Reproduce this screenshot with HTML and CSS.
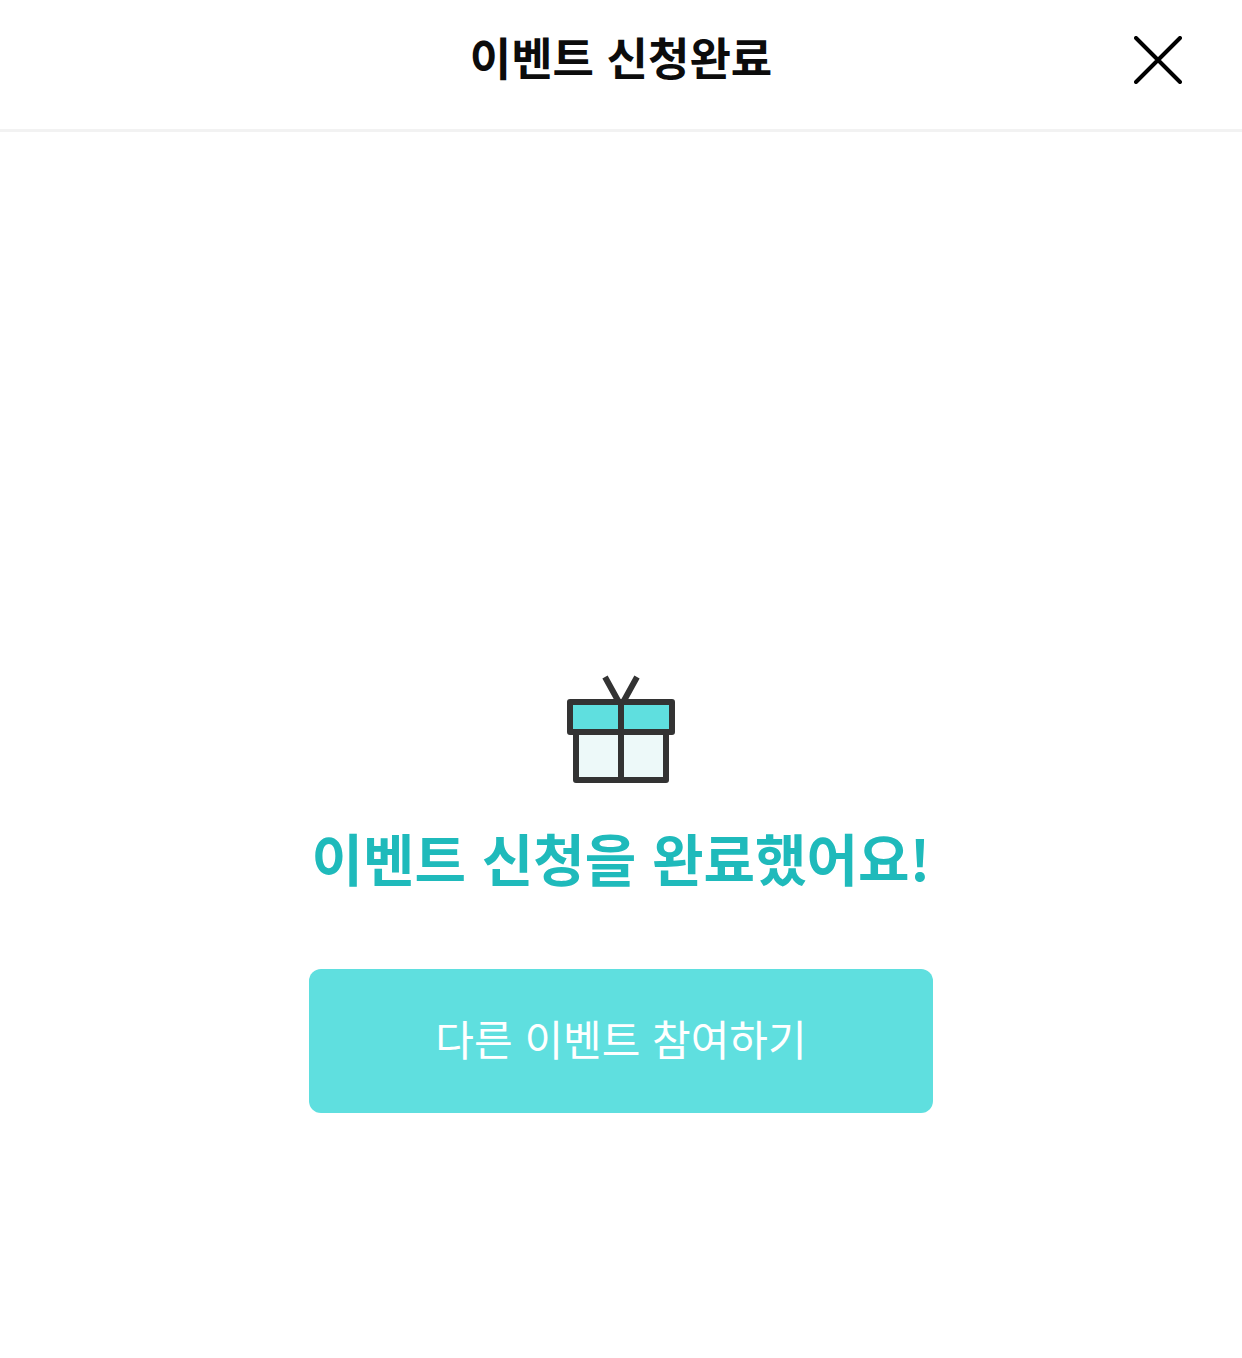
FILE: index.html
```html
<!DOCTYPE html>
<html lang="ko">
<head>
	<meta charset="utf-8">
	<meta name="viewport" content="width=device-width, initial-scale=1">
	<title>이벤트 신청완료</title>
	<link rel="stylesheet" href="styles.css">
</head>
<body>
<header class="header">
	<h1 class="title">이벤트 신청완료</h1>
	<button type="button" class="close" aria-label="닫기">
		<svg width="48" height="48" viewBox="0 0 48 48" fill="none" stroke="#000" stroke-width="4" stroke-linecap="round">
			<path d="M2 2L46 46M46 2L2 46"/>
		</svg>
	</button>
</header>
<main class="complete">
	<svg class="gift" width="108" height="108" viewBox="0 0 108 108" stroke="#333" stroke-width="6" stroke-linejoin="round">
		<path d="M38 2L54 31L70 2" fill="none"/>
		<rect x="9" y="57" width="90" height="48" fill="#edf9f9"/>
		<rect x="3" y="27" width="102" height="30" fill="#5fdfdf"/>
		<path d="M54 27V105"/>
	</svg>
	<h2 class="message">이벤트 신청을 완료했어요!</h2>
	<button type="button" class="more">다른 이벤트 참여하기</button>
</main>
</body>
</html>
```
FILE: styles.css
```css
*
{
	margin: 0;
	padding: 0;
	box-sizing: border-box;
	font-family: "Noto Sans CJK KR", sans-serif;
}
body
{
	display: flex;
	flex-direction: column;
	min-height: 100vh;
	background: #fff;
}
.header
{
	display: grid;
	grid-template-columns: 1fr auto 1fr;
	align-items: center;
	height: 132px;
	padding: 0 60px 10px;
	border-bottom: 3px solid #f2f2f2;
}
.title
{
	grid-column: 2;
	padding-bottom: 6px;
	font-size: 45px;
	line-height: 66px;
	font-weight: 700;
	color: #0c0c0c;
}
.close
{
	justify-self: end;
	display: flex;
	border: none;
	background: none;
	cursor: pointer;
}
.complete
{
	flex: 1;
	display: flex;
	flex-direction: column;
	align-items: center;
	justify-content: center;
	padding: 298px 24px 0;
}
.gift
{
	margin-bottom: 32px;
	overflow: visible;
}
.message
{
	margin-bottom: 70px;
	font-size: 56px;
	line-height: 84px;
	font-weight: 700;
	color: #1fbabb;
}
.more
{
	width: 100%;
	max-width: 624px;
	height: 144px;
	padding-bottom: 8px;
	border: none;
	border-radius: 12px;
	background: #5fdfdf;
	color: #fff;
	font-size: 42px;
	font-weight: 400;
	cursor: pointer;
}
```
